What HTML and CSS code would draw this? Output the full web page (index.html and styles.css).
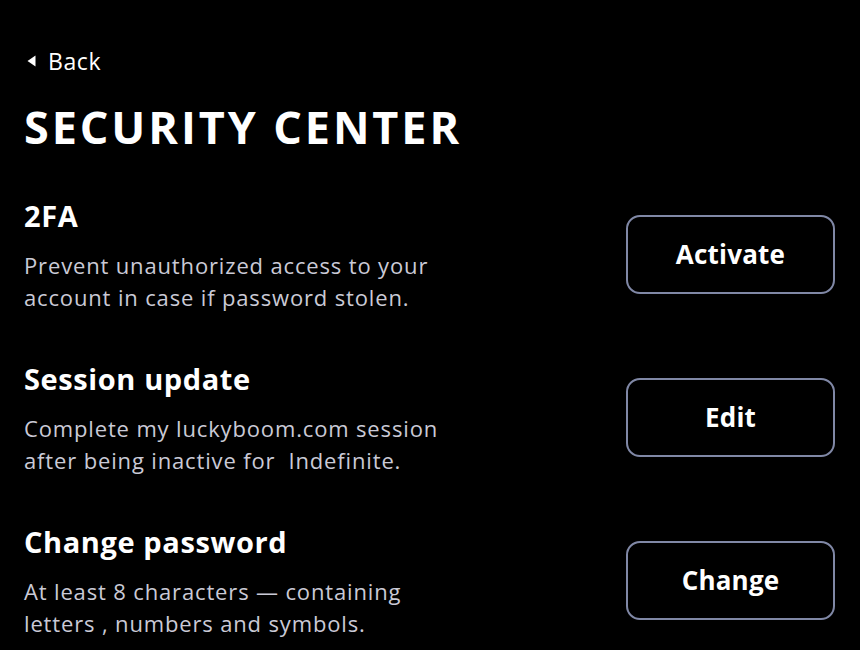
FILE: index.html
```html
<!DOCTYPE html>
<html lang="en">
<head>
<meta charset="utf-8">
<title>Security Center</title>
<link rel="stylesheet" href="styles.css">
</head>
<body>
<main class="page">
  <a class="back" href="#">
    <svg class="back-icon" width="9" height="12" viewBox="0 0 9 12"><path d="M8.5 0.5 L0.5 6 L8.5 11.5 Z" fill="#ffffff"/></svg>
    <span>Back</span>
  </a>
  <h1 class="title">SECURITY CENTER</h1>
  <section class="rows">
    <div class="row">
      <div class="info">
        <h2 class="heading">2FA</h2>
        <p class="desc">Prevent unauthorized access to your<br>account in case if password stolen.</p>
      </div>
      <button class="btn">Activate</button>
    </div>
    <div class="row">
      <div class="info">
        <h2 class="heading">Session update</h2>
        <p class="desc">Complete my luckyboom.com session<br>after being inactive for &nbsp;Indefinite.</p>
      </div>
      <button class="btn">Edit</button>
    </div>
    <div class="row">
      <div class="info">
        <h2 class="heading">Change password</h2>
        <p class="desc">At least 8 characters — containing<br>letters , numbers and symbols.</p>
      </div>
      <button class="btn">Change</button>
    </div>
  </section>
</main>
</body>
</html>
```
FILE: styles.css
```css
html, body {
  margin: 0;
  padding: 0;
  background: #000000;
}
body {
  font-family: "Open Sans", "Lato", sans-serif;
  color: #ffffff;
}
.page {
  padding: 44px 25px 0 24px;
}
.back {
  display: flex;
  align-items: center;
  gap: 12px;
  height: 34px;
  color: #ffffff;
  text-decoration: none;
  font-size: 23px;
  letter-spacing: 0.6px;
  padding-left: 3px;
}
.title {
  margin: 23px 0 0 0;
  font-size: 45px;
  line-height: 52px;
  font-weight: 700;
  letter-spacing: 2.9px;
}
.rows {
  margin-top: 44px;
  display: flex;
  flex-direction: column;
  gap: 47px;
}
.row {
  display: flex;
  align-items: center;
  justify-content: space-between;
  height: 116px;
}
.heading {
  margin: 0;
  font-size: 29px;
  line-height: 36px;
  font-weight: 700;
  letter-spacing: 0.6px;
}
.desc {
  margin: 15px 0 0 0;
  font-size: 22px;
  line-height: 32px;
  letter-spacing: 0.85px;
  color: #cacad6;
}
.btn {
  width: 209px;
  height: 79px;
  border: 2px solid #8088a6;
  border-radius: 14px;
  background: #000000;
  color: #ffffff;
  font-family: inherit;
  font-size: 26px;
  font-weight: 700;
  letter-spacing: 0.2px;
  margin-top: -2px;
  cursor: pointer;
}
```
